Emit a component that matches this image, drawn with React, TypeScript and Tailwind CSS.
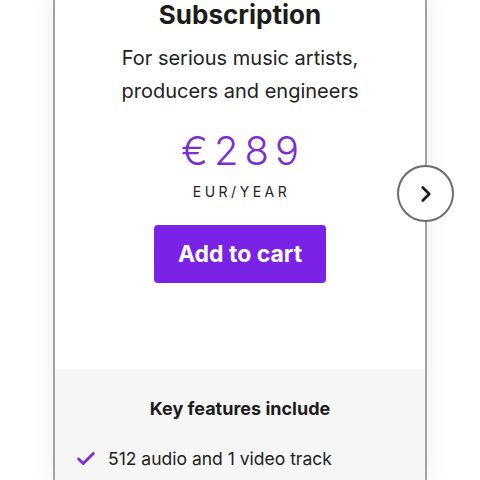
import { Check, ChevronRight } from 'lucide-react';

export default function App() {
  return (
    <div className="relative h-[480px] w-[480px] overflow-hidden bg-white" style={{ fontFamily: 'Inter, "Noto Sans", sans-serif' }}>
      <div className="ml-[53px] flex h-[480px] w-[374px] flex-col border-x-2 border-[#a3a3a3] bg-white shadow-[0_0_24px_rgba(0,0,0,0.08)]">
        {/* Produktkopf */}
        <div className="flex h-[369px] flex-col items-center text-center">
          <h1 className="mt-[-2px] text-[26px] font-bold leading-[34px] text-[#1c1c1c]">Subscription</h1>
          <p className="mt-[10px] text-[20px] leading-[33px] text-[#222]">
            For serious music artists,
            <br />
            producers and engineers
          </p>
          <div className="mt-[20px] pl-[6px] text-[40px] font-light leading-[46px] tracking-[6px] text-[#7b2fd3]">€289</div>
          <div className="mt-[8px] pl-[3px] text-[14px] leading-[20px] tracking-[3.5px] text-[#222]">EUR/YEAR</div>
          <button className="mt-[23px] h-[58px] w-[172px] rounded-[4px] bg-[#7a22e6] text-[23px] font-bold text-white">
            Add to cart
          </button>
        </div>

        {/* Features */}
        <div className="flex-1 bg-[#f5f6f5] px-[20px]">
          <h2 className="mt-[28px] text-center text-[18px] font-bold leading-[24px] text-[#1c1c1c]">Key features include</h2>
          <div className="mt-[25px] flex items-center gap-[11px] text-[17.5px] text-[#222]">
            <Check className="h-[22px] w-[22px] text-[#7b2fd3]" strokeWidth={3.2} />
            <span>512 audio and 1 video track</span>
          </div>
        </div>
      </div>

      <button className="absolute left-[397px] top-[165px] flex h-[57px] w-[57px] items-center justify-center rounded-full border-2 border-[#6b6b6b] bg-white">
        <ChevronRight className="h-[26px] w-[26px] text-[#1c1c1c]" strokeWidth={2.5} />
      </button>
    </div>
  );
}
